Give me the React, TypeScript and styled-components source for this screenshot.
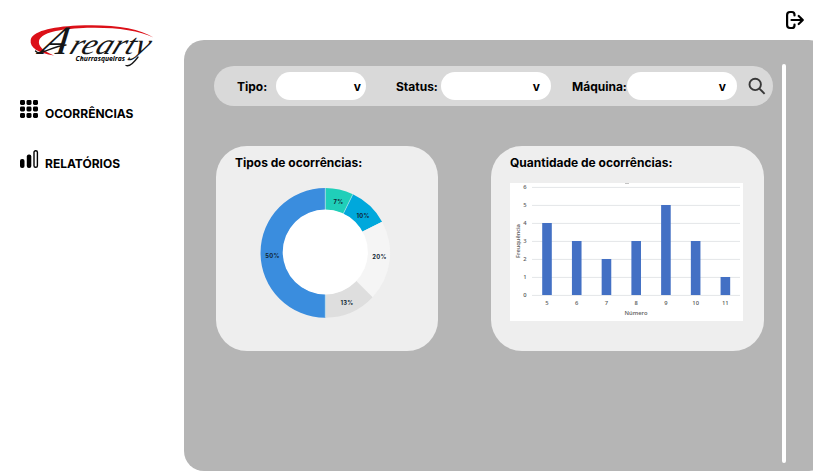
import React from "react";
import styled, { createGlobalStyle } from "styled-components";

const GlobalStyle = createGlobalStyle`
  * { box-sizing: border-box; }
  body {
    margin: 0;
    background: #fff;
    color: #000;
    font-family: Inter, "Liberation Sans", sans-serif;
    overflow: hidden;
  }
  svg { display: block; overflow: visible; }
`;

const Page = styled.div`
  display: flex;
  width: 813px;
  height: 471px;
  overflow: hidden;
`;

const Sidebar = styled.aside`
  flex: 0 0 184px;
  padding: 10px 0 0 20px;
`;

const Nav = styled.nav`
  display: flex;
  flex-direction: column;
  gap: 30px;
  padding-top: 28px;
`;

const NavItem = styled.a`
  display: flex;
  gap: 7px;
  height: 20px;
  font-size: 12px;
  font-weight: 700;
  line-height: 15px;
  svg { flex: none; }
  span { padding-top: 6px; white-space: nowrap; }
`;

const Main = styled.main`
  flex: 0 0 645px;
  display: flex;
  flex-direction: column;
`;

const TopBar = styled.header`
  height: 40px;
  padding: 10px 0 0 601px;
`;

const Panel = styled.section`
  flex: 1;
  display: flex;
  border-radius: 20px;
  background: #b5b5b5;
  padding: 24px 0 8px 30px;
`;

const Content = styled.div`
  width: 568px;
  padding-top: 2px;
`;

const Scrollbar = styled.div`
  width: 4px;
  height: 399px;
  border-radius: 2px;
  background: #fff;
`;

const FilterBar = styled.div`
  display: flex;
  align-items: center;
  width: 559px;
  height: 40px;
  padding: 0 8px 0 23px;
  border-radius: 20px;
  background: #d9d9d9;
`;

const Filter = styled.label<{ $label: number; $after: number }>`
  display: flex;
  align-items: center;
  margin-right: ${(p) => p.$after}px;
  font-size: 12px;
  font-weight: 700;
  line-height: 15px;
  > span {
    width: ${(p) => p.$label}px;
    padding-top: 1px;
    white-space: nowrap;
  }
`;

const Select = styled.div<{ $width: number; $end: number }>`
  display: flex;
  align-items: center;
  justify-content: flex-end;
  width: ${(p) => p.$width}px;
  height: 28px;
  padding: 0 ${(p) => p.$end}px 0 0;
  border-radius: 14px;
  background: #fff;
`;

const Cards = styled.div`
  display: flex;
  gap: 53px;
  padding: 40px 0 0 2px;
`;

const Card = styled.article<{ $width: number }>`
  flex: none;
  width: ${(p) => p.$width}px;
  height: 205px;
  padding: 9px 19px 0;
  border-radius: 31px;
  background: #eee;
`;

const CardTitle = styled.h2`
  margin: 0;
  font-size: 12px;
  font-weight: 700;
  line-height: 15px;
  white-space: nowrap;
`;

const DonutBox = styled.div`
  padding: 17px 0 0 25px;
`;

const ChartBox = styled.div`
  padding-top: 13px;
`;

const Logo = () => (
  <svg width="150" height="62" viewBox="20 10 150 62" aria-label="Arearty Churrasqueiras">
    <path
      d="M153.500 37.500C139 28 111 24 78 25.600C50 26.800 32 32 30.700 40C29.500 47.500 38 53 54 55.500C43 51 38 46 39 41C40.500 34 54 29.500 79 28.200C109 26.500 137 29.500 153.500 37.500Z"
      fill="#dc1018"
    />
    <g fill="#161616" fontFamily="'Liberation Serif', serif" fontStyle="italic">
      <text transform="translate(38 54) skewX(-27)" fontSize="40" textLength="26" lengthAdjust="spacingAndGlyphs">A</text>
      <text transform="translate(68 54) skewX(-22)" fontSize="29" textLength="79" lengthAdjust="spacingAndGlyphs">rearty</text>
    </g>
    <path d="M35.500 51C40 57 51 46 66 45M126 65.500C130 67 134 62.500 138 57" fill="none" stroke="#161616" strokeWidth="1.300" strokeLinecap="round" />
    <text x="75.500" y="61" fontFamily="'Open Sans', sans-serif" fontSize="7" fontStyle="italic" fontWeight="700" textLength="49.500" lengthAdjust="spacingAndGlyphs">
      Churrasqueiras
    </text>
  </svg>
);

const GridIcon = () => (
  <svg width="18" height="18" viewBox="0 0 18 18">
    {[0, 6.5, 13].map((y) =>
      [0, 6.5, 13].map((x) => <rect key={`${x}-${y}`} x={x} y={y} width="5" height="5" rx="1.400" />)
    )}
  </svg>
);

const BarsIcon = () => (
  <svg width="18" height="18" viewBox="0 0 18 18">
    <rect x="0" y="9" width="4.500" height="9" rx="2" />
    <rect x="6.800" y="4.500" width="4.500" height="13.500" rx="2" />
    <rect x="14" y="0.700" width="3.400" height="16.600" rx="1.600" fill="none" stroke="#000" strokeWidth="1.400" />
  </svg>
);

const ExitIcon = () => (
  <svg width="20" height="20" viewBox="0 0 20 20" fill="none" stroke="#000" strokeWidth="2.200" strokeLinecap="round" strokeLinejoin="round">
    <path d="M9.500 5.500V4.800Q9.500 2 7 2H5Q2.100 2 2.100 5V15Q2.100 18 5 18H7Q9.500 18 9.500 15.200V14.500M6.500 10H17.500M13.700 6L17.800 10L13.700 14" />
  </svg>
);

const SearchIcon = () => (
  <svg width="18" height="18" viewBox="0 0 18 18" fill="none" stroke="#383838" strokeWidth="1.900">
    <circle cx="7.200" cy="7.400" r="5.700" />
    <path d="M11.400 11.600L16.600 16.800" />
  </svg>
);

const slices = [
  { from: 0, to: 7, color: "#20cfb9", label: "7%", x: 78.400, y: 16 },
  { from: 7, to: 17, color: "#00a8dc", label: "10%", x: 103, y: 30 },
  { from: 17, to: 37, color: "#f5f5f5", label: "20%", x: 119.500, y: 71.400 },
  { from: 37, to: 50, color: "#dedede", label: "13%", x: 87, y: 117 },
  { from: 50, to: 100, color: "#3a8dde", label: "50%", x: 12.500, y: 70 },
];

const point = (percent: number, radius: number, cy: number) => {
  const angle = (percent / 100) * Math.PI * 2;
  return `${65.300 + Math.sin(angle) * radius} ${cy - Math.cos(angle) * radius}`;
};

const Donut = () => (
  <svg width="131" height="131" viewBox="0 0 131 131">
    {slices.map((s) => (
      <path
        key={s.label}
        d={`M${point(s.from, 64.800, 65.900)}A64.800 64.800 0 0 1 ${point(s.to, 64.800, 65.900)}L${point(s.to, 42, 65)}A42 42 0 0 0 ${point(s.from, 42, 65)}Z`}
        fill={s.color}
      />
    ))}
    <path d={`M65.300 1V24M${point(7, 64.800, 65.900)}L${point(7, 42, 65)}M65.300 107V130`} stroke="#c9edf0" strokeWidth="0.600" />
    <circle cx="65.300" cy="65" r="42.600" fill="#fff" />
    <g fill="#102632" fontSize="5.800" fontWeight="700" textAnchor="middle" letterSpacing="0.300">
      {slices.map((s) => (
        <text key={s.label} x={s.x} y={s.y + 0.5}>{s.label}</text>
      ))}
    </g>
  </svg>
);

const bars = [
  { label: "5", value: 4 },
  { label: "6", value: 3 },
  { label: "7", value: 2 },
  { label: "8", value: 3 },
  { label: "9", value: 5 },
  { label: "10", value: 3 },
  { label: "11", value: 1 },
];

const Histogram = () => (
  <svg width="233" height="138" viewBox="0 0 233 138">
    <rect width="233" height="138" fill="#fff" />
    <path d="M115 0.500h4" stroke="#aaa" strokeWidth="0.700" />
    <g fontFamily="'Open Sans', sans-serif" fontSize="5.800" fontWeight="600" fill="#606060" textAnchor="middle">
      {[0, 1, 2, 3, 4, 5, 6].map((n) => (
        <React.Fragment key={n}>
          <path d={`M22 ${112.400 - n * 18}H230`} stroke="#e4e6e8" strokeWidth="1" />
          <text x="15" y={114.200 - n * 18}>{n}</text>
        </React.Fragment>
      ))}
      {bars.map((b, i) => (
        <React.Fragment key={b.label}>
          <rect x={32.200 + i * 29.730} y={112 - b.value * 18} width="9.600" height={b.value * 18} fill="#4370c4" />
          <text x={37 + i * 29.730} y="122">{b.label}</text>
        </React.Fragment>
      ))}
      <text x="126" y="132" textLength="23">Número</text>
      <text transform="translate(10 58) rotate(-90)" textLength="34">Freuquência</text>
    </g>
  </svg>
);

export default function App() {
  return (
    <>
      <GlobalStyle />
      <Page>
        <Sidebar>
          <Logo />
          <Nav>
            <NavItem><GridIcon /><span>OCORRÊNCIAS</span></NavItem>
            <NavItem><BarsIcon /><span>RELATÓRIOS</span></NavItem>
          </Nav>
        </Sidebar>
        <Main>
          <TopBar><ExitIcon /></TopBar>
          <Panel>
            <Content>
              <FilterBar>
                <Filter $label={39} $after={30}><span>Tipo:</span><Select $width={90} $end={5}>v</Select></Filter>
                <Filter $label={45} $after={21}><span>Status:</span><Select $width={110} $end={11}>v</Select></Filter>
                <Filter $label={55} $after={11}><span>Máquina:</span><Select $width={110} $end={11}>v</Select></Filter>
                <SearchIcon />
              </FilterBar>
              <Cards>
                <Card $width={222}>
                  <CardTitle>Tipos de ocorrências:</CardTitle>
                  <DonutBox><Donut /></DonutBox>
                </Card>
                <Card $width={273}>
                  <CardTitle>Quantidade de ocorrências:</CardTitle>
                  <ChartBox><Histogram /></ChartBox>
                </Card>
              </Cards>
            </Content>
            <Scrollbar />
          </Panel>
        </Main>
      </Page>
    </>
  );
}
